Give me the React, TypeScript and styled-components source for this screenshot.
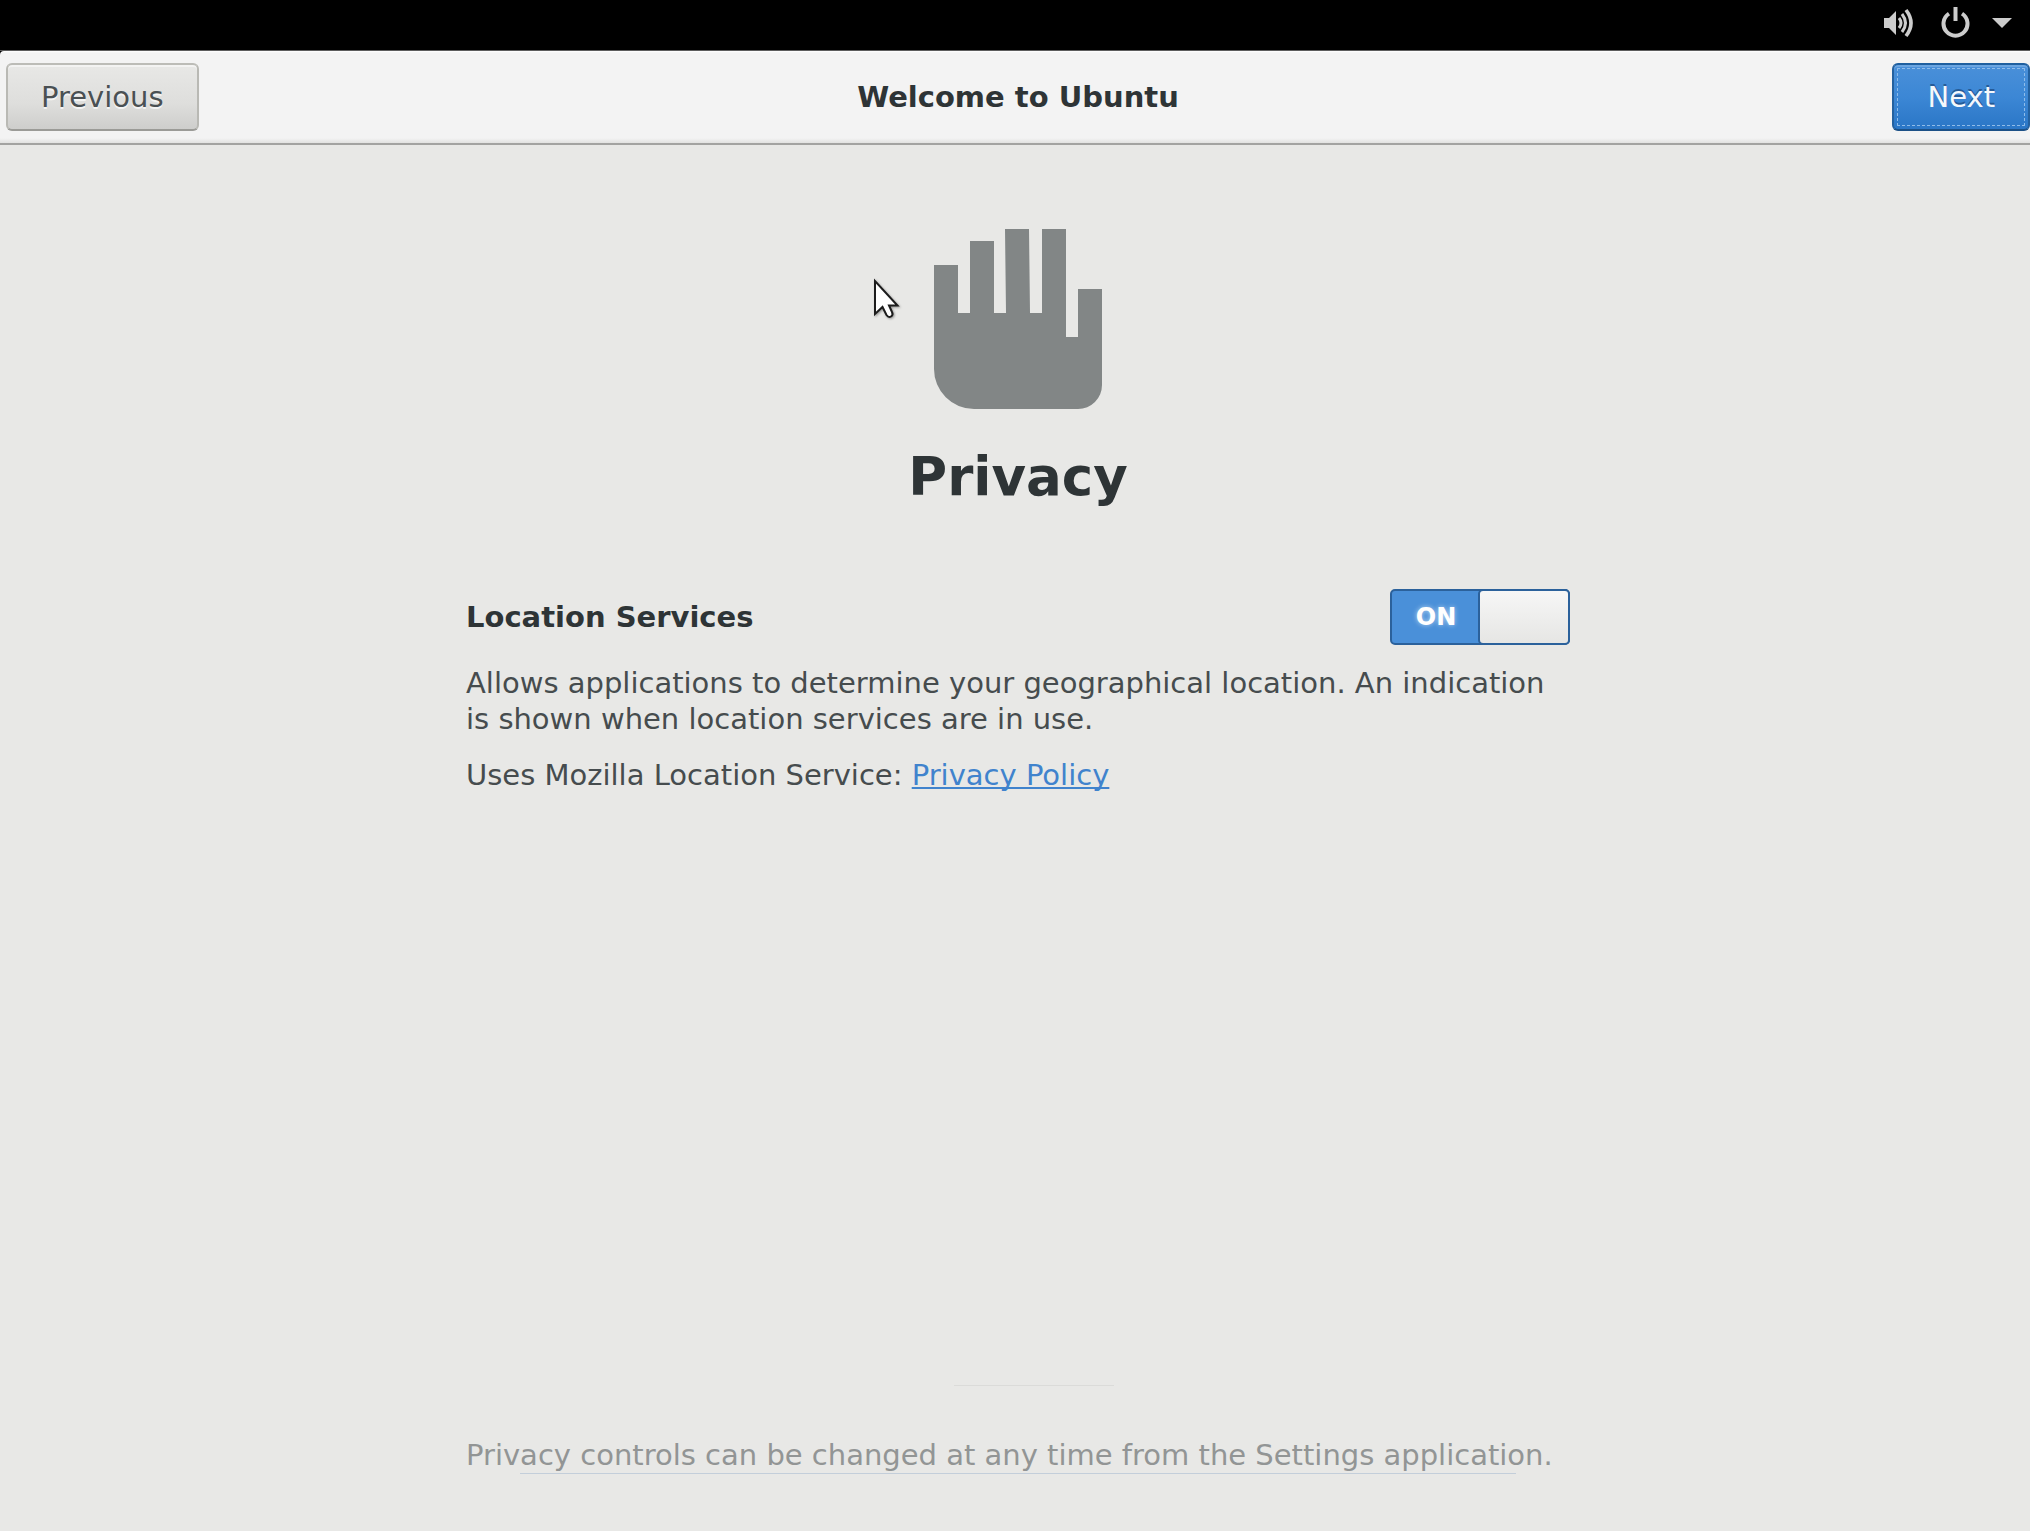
import React, { useState } from "react";
import styled, { createGlobalStyle } from "styled-components";

const GlobalStyle = createGlobalStyle`
  *, *::before, *::after { box-sizing: border-box; }
  body {
    margin: 0;
    background: #e8e8e6;
    color: #2e3436;
    font-family: "DejaVu Sans", sans-serif;
    font-size: 29px;
    line-height: 36px;
  }
  h1, h2, p { margin: 0; }
`;

const Screen = styled.div`
  min-height: 100vh;
  display: flex;
  flex-direction: column;
  background: #000;
`;

const TopBar = styled.div`
  height: 51px;
  flex: none;
  display: flex;
  align-items: center;
  justify-content: flex-end;
  gap: 22px;
  padding: 0 18px 4px 0;
  border-bottom: 1px solid #5c5c5c;
`;

const StatusIcon = styled.svg`
  display: block;
  flex: none;
  color: #ccc;
`;

const HeaderBar = styled.header`
  height: 94px;
  flex: none;
  display: grid;
  grid-template-columns: 1fr auto 1fr;
  align-items: start;
  padding: 12px 0 0 6px;
  background: linear-gradient(#fff 0, #f3f3f3 2px, #f3f3f3 87px, #e2e2e1 92px);
  border-bottom: 2px solid #a3a3a1;
  border-top-left-radius: 4px;
`;

const Title = styled.h1`
  font-size: 29px;
  line-height: 68px;
  font-weight: bold;
`;

const HeaderButton = styled.button<{ $primary?: boolean }>`
  height: 68px;
  padding: 0 33px;
  justify-self: ${(p) => (p.$primary ? "end" : "start")};
  font: inherit;
  border: 2px solid;
  border-radius: 6px;
  color: ${(p) => (p.$primary ? "#f4f8fc" : "#4a5053")};
  border-color: ${(p) => (p.$primary ? "#1f5f9f #24619f #1c5187" : "#bcbcb7 #b9b9b4 #9b9b97")};
  background: ${(p) =>
    p.$primary ? "linear-gradient(#4a90d9, #3c87d5 50%, #2a76c6)" : "linear-gradient(#e8e8e6, #dededc 60%, #cececc)"};
  box-shadow: inset 0 2px ${(p) => (p.$primary ? "#6ba5e1" : "#f3f3f2")};
  text-shadow: ${(p) => (p.$primary ? "0 -2px rgba(20, 60, 110, 0.6)" : "0 2px rgba(255, 255, 255, 0.7)")};
  outline: ${(p) => (p.$primary ? "1px dashed #8fbce9" : "none")};
  outline-offset: -6px;
`;

const Page = styled.main`
  flex: 1;
  display: flex;
  flex-direction: column;
  align-items: center;
  padding: 84px 0 58px 6px;
  background: #e8e8e6;
`;

const Hero = styled.div`
  position: relative;
  display: flex;
  flex-direction: column;
  align-items: center;
  gap: 38px;
  margin-bottom: 82px;
`;

const HandIcon = styled.svg`
  display: block;
  fill: #828686;
`;

const Heading = styled.h2`
  font-size: 53px;
  line-height: 60px;
  font-weight: bold;
`;

const Pointer = styled.svg`
  position: absolute;
  top: 49px;
  left: -35px;
  filter: drop-shadow(1px 1px 1px rgba(0, 0, 0, 0.35));
`;

const Column = styled.section`
  width: 1104px;
  max-width: 100%;
  display: flex;
  flex-direction: column;
  gap: 20px;
`;

const SettingRow = styled.div`
  display: flex;
  align-items: center;
  justify-content: space-between;
`;

const SettingLabel = styled.label`
  font-weight: bold;
`;

const Switch = styled.span<{ $on: boolean }>`
  position: relative;
  display: grid;
  grid-template-columns: ${(p) => (p.$on ? "88px 1fr" : "1fr 88px")};
  width: 180px;
  height: 56px;
`;

const SwitchInput = styled.input`
  position: absolute;
  inset: 0;
  width: 100%;
  height: 100%;
  margin: 0;
  appearance: none;
  border: 2px solid #2b619b;
  border-radius: 5px;
  background: #4a90d9;
  &:not(:checked) {
    border-color: #a1a19d;
    background: #d6d6d4;
  }
`;

const SwitchText = styled.span<{ $on: boolean }>`
  order: ${(p) => (p.$on ? 0 : 1)};
  z-index: 1;
  padding-left: 4px;
  pointer-events: none;
  text-align: center;
  font-size: 24px;
  line-height: 56px;
  font-weight: bold;
  color: ${(p) => (p.$on ? "#fff" : "#8b8e8f")};
  text-shadow: ${(p) => (p.$on ? "0 0 5px rgba(255, 255, 255, 0.6)" : "none")};
`;

const Knob = styled.span`
  z-index: 1;
  pointer-events: none;
  border: 2px solid #2b619b;
  border-radius: 5px;
  background: linear-gradient(#f6f6f6, #e6e6e4);
`;

const Body = styled.p`
  color: #464c4e;
`;

const PolicyLink = styled.a`
  color: #4083cd;
  text-decoration: underline;
  text-decoration-thickness: 2px;
  text-underline-offset: 2px;
  text-decoration-skip-ink: none;
`;

const Footer = styled.footer`
  width: 1104px;
  max-width: 100%;
  margin-top: auto;
  display: flex;
  flex-direction: column;
  align-items: center;
  gap: 51px;
`;

const Rule = styled.hr`
  width: 160px;
  height: 1px;
  margin: 0 0 0 32px;
  border: 0;
  background: #dbdbd9;
`;

const Note = styled.p`
  position: relative;
  width: 100%;
  color: #929595;
  &::after {
    content: "";
    position: absolute;
    top: 100%;
    left: 54px;
    right: 54px;
    height: 1px;
    background: #c3ceda;
  }
`;

export default function App() {
  const [location, setLocation] = useState(true);
  return (
    <Screen>
      <GlobalStyle />
      <TopBar>
        <StatusIcon width="34" height="32" viewBox="0 0 34 32" aria-label="Volume">
          <path d="M0 11h5l7-7v24l-7-7H0z" fill="currentColor" />
          <g fill="none" stroke="currentColor">
            <path d="M15 11q4 5 0 10" strokeWidth="3" />
            <path d="M18 7q7 9 0 18" strokeWidth="3" />
            <path d="M22 3q10 13 0 26" strokeWidth="3.6" />
          </g>
        </StatusIcon>
        <StatusIcon width="30" height="32" viewBox="0 0 30 32" aria-label="Power">
          <g fill="none" stroke="currentColor" strokeWidth="4">
            <path d="M9 6.600a12 12 0 1 0 13 0" />
            <path d="M15.500 0v14" />
          </g>
        </StatusIcon>
        <StatusIcon width="20" height="10" viewBox="0 0 20 10" aria-hidden="true">
          <path d="M0 0h20L10 10z" fill="currentColor" />
        </StatusIcon>
      </TopBar>
      <HeaderBar>
        <HeaderButton type="button">Previous</HeaderButton>
        <Title>Welcome to Ubuntu</Title>
        <HeaderButton type="button" $primary>
          Next
        </HeaderButton>
      </HeaderBar>
      <Page>
        <Hero>
          <HandIcon width="168" height="180" viewBox="0 0 168 180" aria-hidden="true">
            <path d="M0 36H24V84H36V12H60V84H72L71 0H95L96 84H108V0H132V108H144V60H168V156A24 24 0 0 1 144 180H40A40 40 0 0 1 0 140Z" />
          </HandIcon>
          <Heading>Privacy</Heading>
          <Pointer width="28" height="42" viewBox="0 0 28 42" aria-hidden="true">
            <path
              d="M2 3V36L9.500 29L13.500 37Q15.500 40 18 38.500Q20.500 37 19 34L16 27.500H24.500Z"
              fill="#fff"
              stroke="#1c1c1c"
              strokeWidth="2"
            />
          </Pointer>
        </Hero>
        <Column>
          <SettingRow>
            <SettingLabel htmlFor="location">Location Services</SettingLabel>
            <Switch $on={location}>
              <SwitchInput
                id="location"
                type="checkbox"
                role="switch"
                checked={location}
                onChange={(e) => setLocation(e.target.checked)}
              />
              <SwitchText $on={location}>{location ? "ON" : "OFF"}</SwitchText>
              <Knob />
            </Switch>
          </SettingRow>
          <Body>
            Allows applications to determine your geographical location. An indication is shown when location services
            are in use.
          </Body>
          <Body>
            Uses Mozilla Location Service: <PolicyLink href="#privacy-policy">Privacy Policy</PolicyLink>
          </Body>
        </Column>
        <Footer>
          <Rule />
          <Note>Privacy controls can be changed at any time from the Settings application.</Note>
        </Footer>
      </Page>
    </Screen>
  );
}
